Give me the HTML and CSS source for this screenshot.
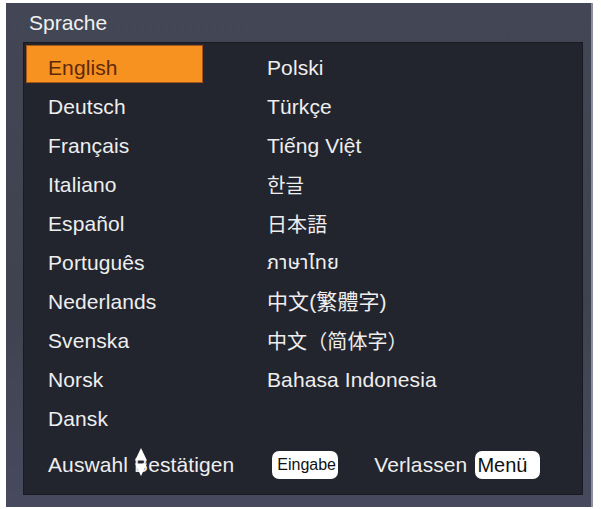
FILE: index.html
```html
<!DOCTYPE html>
<html lang="de">
<head>
<meta charset="utf-8">
<title>Sprache</title>
<link rel="stylesheet" href="styles.css">
</head>
<body>
<div class="osd">
  <div class="osd-title">Sprache</div>
  <div class="osd-body">
    <div class="lang-grid">
      <div class="lang lang-active">English</div>
      <div class="lang">Polski</div>
      <div class="lang">Deutsch</div>
      <div class="lang">Türkçe</div>
      <div class="lang">Français</div>
      <div class="lang">Tiếng Việt</div>
      <div class="lang">Italiano</div>
      <div class="lang lang-kr">한글</div>
      <div class="lang">Español</div>
      <div class="lang lang-jp">日本語</div>
      <div class="lang">Português</div>
      <div class="lang lang-th">ภาษาไทย</div>
      <div class="lang">Nederlands</div>
      <div class="lang lang-tc">中文(繁體字)</div>
      <div class="lang">Svenska</div>
      <div class="lang lang-sc">中文（简体字）</div>
      <div class="lang">Norsk</div>
      <div class="lang">Bahasa Indonesia</div>
      <div class="lang">Dansk</div>
      <div class="lang"></div>
    </div>
    <div class="footer">
      <span class="hint">Auswahl <span class="icon-wrap">B<svg class="updown" viewBox="0 0 12 28" width="12" height="28"><polygon points="6,0 12,12.5 0,12.5" fill="#fff"/><polygon points="0,15.5 12,15.5 6,28" fill="#fff"/></svg></span>estätigen</span>
      <span class="key key-small">Eingabe</span>
      <span class="hint hint-exit">Verlassen</span>
      <span class="key key-menu">Menü</span>
    </div>
  </div>
</div>
</body>
</html>
```

FILE: styles.css
```css
html, body {
  margin: 0;
  padding: 0;
  background: #ffffff;
}

body {
  font-family: "Liberation Sans", Arial, sans-serif;
  padding: 3px 0 0 6px;
}

.osd {
  width: 585px;
  height: 504px;
  background: linear-gradient(180deg, #434755 0%, #3f4350 60%, #474a5e 100%);
  border-right: 2px solid #8c8f9c;
  box-sizing: content-box;
  display: flex;
  flex-direction: column;
}

.osd-title {
  height: 39px;
  box-sizing: border-box;
  padding: 8px 0 0 23px;
  color: #f0f0f0;
  font-size: 21px;
  line-height: 24px;
}

.osd-body {
  margin-left: 17px;
  width: 560px;
  height: 453px;
  box-sizing: border-box;
  background: #23252e;
  border: 1px solid #1a1b22;
  padding: 2px 0 0 2px;
  display: flex;
  flex-direction: column;
}

.lang-grid {
  display: grid;
  grid-template-columns: 219px 1fr;
  grid-auto-rows: 38px;
  row-gap: 1px;
}

.lang {
  width: 177px;
  box-sizing: border-box;
  padding: 11px 0 0 22px;
  font-size: 21px;
  line-height: 24px;
  color: #eeeeee;
  white-space: nowrap;
  letter-spacing: 0.1px;
}

.lang-active {
  background: #f7911f;
  border: 1px solid #a5561a;
  padding: 10px 0 0 21px;
  color: #5e2a0c;
}

.lang-kr { font-family: "Noto Sans CJK KR", "Liberation Sans", sans-serif; font-size: 20px; }
.lang-jp { font-family: "Noto Sans CJK JP", "Liberation Sans", sans-serif; font-size: 20px; }
.lang-tc { font-family: "Liberation Sans", "Noto Sans CJK TC", sans-serif; }
.lang-sc { font-family: "Noto Sans CJK SC", "Liberation Sans", sans-serif; font-size: 20px; }
.lang-th { font-family: "Noto Sans Thai", "DejaVu Sans", sans-serif; font-size: 20px; }

.footer {
  display: flex;
  align-items: center;
  margin-top: 17px;
  padding-left: 22px;
  height: 28px;
  color: #eeeeee;
  font-size: 21px;
  white-space: nowrap;
  letter-spacing: 0.1px;
}

.hint {
  line-height: 24px;
}

.icon-wrap {
  position: relative;
}

.updown {
  position: absolute;
  left: 1px;
  top: -5px;
}

.key {
  background: #ffffff;
  color: #111111;
  border-radius: 7px;
  height: 28px;
  box-sizing: border-box;
  display: flex;
  align-items: center;
  overflow: hidden;
  letter-spacing: 0;
}

.key-small {
  margin-left: 38px;
  width: 66px;
  padding-left: 5px;
  font-size: 16px;
}

.hint-exit {
  margin-left: 36px;
}

.key-menu {
  margin-left: 8px;
  width: 65px;
  padding-left: 2px;
  font-size: 20px;
}
```
